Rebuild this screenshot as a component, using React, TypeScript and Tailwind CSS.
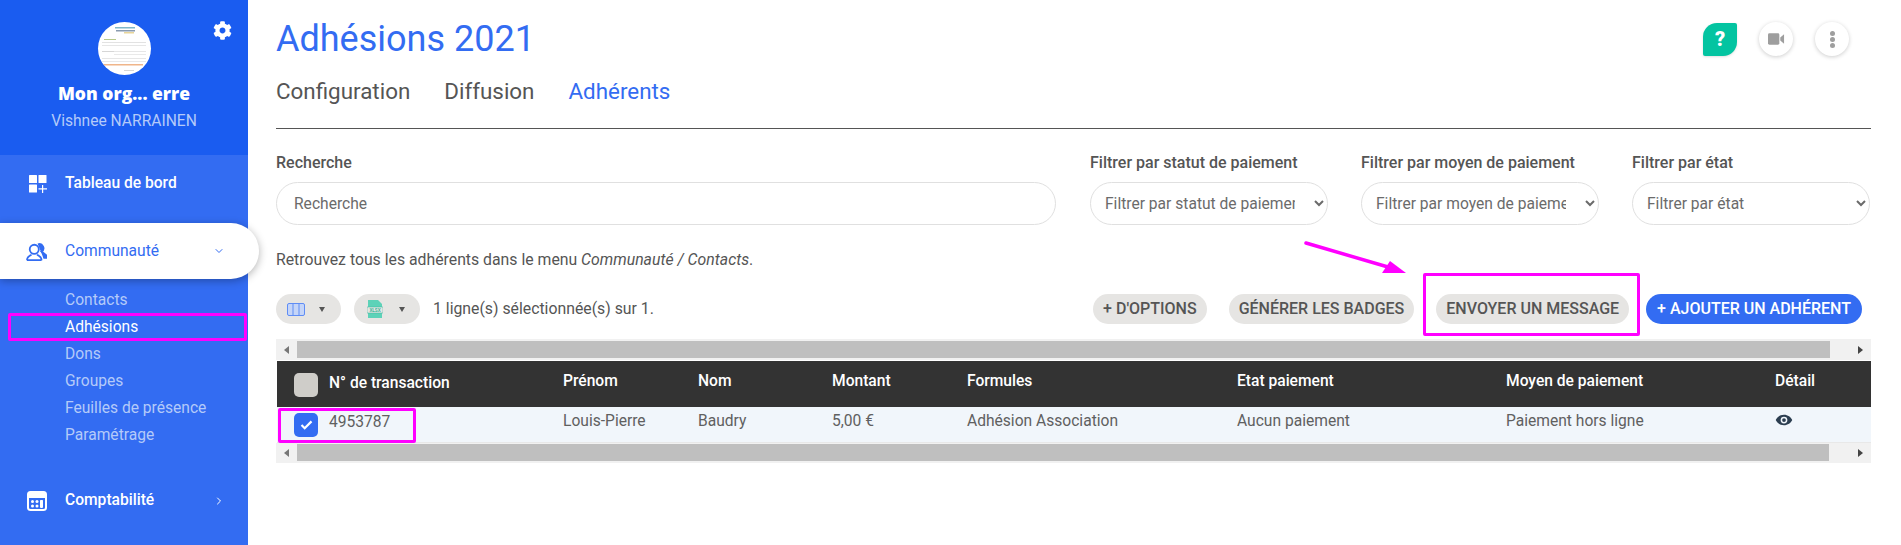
import React from 'react';
import { ChevronDown, ChevronRight } from 'lucide-react';
import { FaCog } from 'react-icons/fa';

const subItems = ['Contacts', 'Adhésions', 'Dons', 'Groupes', 'Feuilles de présence', 'Paramétrage'];

const columns = [
  { label: 'Prénom', value: 'Louis-Pierre', w: 'w-[135px]' },
  { label: 'Nom', value: 'Baudry', w: 'w-[134px]' },
  { label: 'Montant', value: '5,00 €', w: 'w-[135px]' },
  { label: 'Formules', value: 'Adhésion Association', w: 'w-[270px]' },
  { label: 'Etat paiement', value: 'Aucun paiement', w: 'w-[269px]' },
  { label: 'Moyen de paiement', value: 'Paiement hors ligne', w: 'w-[269px]' },
];

const Sidebar = () => {
  return (
    <aside className="w-[248px] shrink-0 h-[545px] bg-[#336cf2] relative">
      <div className="h-[155px] bg-[#1a5cf0] flex flex-col items-center pt-[22px] relative">
        <div className="w-[53px] h-[53px] rounded-full bg-white overflow-hidden">
          <svg viewBox="0 0 53 53" className="w-full h-full">
            <rect x="17" y="5" width="20" height="1.5" fill="#7fb7c9" />
            <rect x="18" y="8" width="19" height="1.5" fill="#8a9bb0" />
            <rect x="26" y="10" width="10" height="1.5" fill="#e8d59a" />
            <rect x="6" y="17" width="12" height="1" fill="#b7c98a" />
            <rect x="4" y="20" width="44" height="1" fill="#e2e2e2" />
            <rect x="4" y="23" width="44" height="1" fill="#e6e6e6" />
            <rect x="4" y="29" width="12" height="1" fill="#d6d6d6" />
            <rect x="16" y="29" width="32" height="1" fill="#e6e6e6" />
            <rect x="16" y="32" width="32" height="1" fill="#e9e9e9" />
            <rect x="4" y="36" width="44" height="1" fill="#e6e6e6" />
            <rect x="4" y="39" width="44" height="1" fill="#e9e9e9" />
            <rect x="5" y="42" width="40" height="1.5" fill="#f0b58a" />
            <rect x="26" y="48" width="10" height="1" fill="#d6d6d6" />
          </svg>
        </div>
        <div className="mt-[6px] text-[17.5px] leading-[24px] font-black text-white font-['Open_Sans',sans-serif]">Mon org... erre</div>
        <div className="text-[15.6px] leading-[20px] mt-[6px] text-[#b4caf9]">Vishnee NARRAINEN</div>
        <FaCog className="absolute left-[213px] top-[21px] w-[19px] h-[19px] text-white" />
      </div>

      <div className="h-[68px] pb-[10px] flex items-center pl-[29px] text-white text-[15.6px] font-medium">
        <svg viewBox="0 0 18 18" className="w-[18px] h-[18px] mr-[18px] fill-white">
          <rect x="0" y="0" width="8" height="8" rx="0.5" />
          <rect x="9.5" y="0" width="8" height="8" rx="0.5" />
          <rect x="0" y="9.5" width="8" height="8" rx="0.5" />
          <path d="M13 10h1.2v3.2H18v1.2h-3.8V18H13v-3.6H9.5v-1.2H13z" />
        </svg>
        Tableau de bord
      </div>

      <div className="w-[259px] h-[56px] pt-[1px] bg-white rounded-r-[28px] shadow-[0_2px_8px_rgba(0,0,0,0.3)] flex items-center pl-[25px] text-[#336cf2] text-[15.6px] relative">
        <svg viewBox="0 0 24 22" className="w-[24px] h-[20px] mr-[16px] fill-none stroke-[#336cf2]" strokeWidth="2">
          <circle cx="9" cy="8" r="5" />
          <path d="M1 20c0-4 3-5 5-6M17 20c0-4-3-5-5-6M1 20h16" />
          <path d="M13 2.5a4.5 4.5 0 0 1 4 8l5 4v3h-3" fill="#336cf2" />
        </svg>
        Communauté
        <ChevronDown className="absolute left-[213px] top-[22px] w-[12px] h-[12px]" strokeWidth={2} />
      </div>

      <ul className="pt-[8px] pl-[65px] text-[15.6px] leading-[27px] text-[#b4caf9]">
        {subItems.map((item) => (
          <li key={item} className={item === 'Adhésions' ? 'text-white' : ''}>{item}</li>
        ))}
      </ul>

      <div className="mt-[32px] h-[40px] flex items-center pl-[27px] text-white text-[15.6px] font-medium relative">
        <svg viewBox="0 0 20 20" className="w-[20px] h-[20px] mr-[18px]">
          <rect x="1" y="1" width="18" height="18" rx="2.5" fill="none" stroke="white" strokeWidth="2" />
          <rect x="1" y="1" width="18" height="6" fill="white" />
          <circle cx="5.5" cy="10.5" r="1.5" fill="white" />
          <circle cx="10" cy="10.5" r="1.5" fill="white" />
          <circle cx="14.5" cy="10.5" r="1.5" fill="white" />
          <circle cx="5.5" cy="15" r="1.5" fill="white" />
          <circle cx="10" cy="15" r="1.5" fill="white" />
          <rect x="13" y="9" width="3" height="8" rx="1" fill="white" />
        </svg>
        Comptabilité
        <ChevronRight className="absolute left-[213px] top-[14px] w-[12px] h-[12px]" strokeWidth={2} />
      </div>
    </aside>
  );
};

const FilterSelect = ({ label }: { label: string }) => {
  return (
    <div className="w-[238px]">
      <label className="block text-[16px] leading-[20px] font-medium text-[#555] mb-[9px]">{label}</label>
      <select className="w-[238px] h-[43px] pl-[10px] pr-[16px] rounded-[22px] border border-[#e0e0e0] bg-white text-[15.6px] text-[#6b6b6b]">
        <option>{label}</option>
      </select>
    </div>
  );
};

const ScrollBar = ({ thumb, className }: { thumb: string; className: string }) => {
  return (
    <div className={`${className} bg-[#f1f1f1] flex`}>
      <div className="w-[21px] h-[17px] flex items-center justify-center">
        <div className="w-0 h-0 border-y-[4px] border-y-transparent border-r-[5px] border-r-[#777]" />
      </div>
      <div className={`${thumb} h-[17px] bg-[#bfbfbf]`} />
      <div className="flex-1 h-[17px] flex items-center justify-end pr-[8px]">
        <div className="w-0 h-0 border-y-[4px] border-y-transparent border-l-[5px] border-l-[#444]" />
      </div>
    </div>
  );
};

const GreyButton = ({ children }: { children: React.ReactNode }) => {
  return (
    <button className="h-[30px] px-[10px] rounded-[15px] bg-[#e6e5e3] text-[#555] text-[16px] font-medium uppercase whitespace-nowrap">
      {children}
    </button>
  );
};

const Main = () => {
  return (
    <main className="flex-1 pl-[28px] pr-[30px] relative">
      <div className="flex items-start justify-between h-[61px]">
        <h1 className="mt-[17px] text-[36px] leading-[44px] text-[#336cf2]">Adhésions 2021</h1>
        <div className="flex items-center gap-[22px] mt-[22px] mr-[22px]">
          <div className="w-[34px] h-[33px] bg-[#03c4a1] rounded-tl-[14px] rounded-br-[14px] rounded-tr-[2px] rounded-bl-[2px] flex items-center justify-center text-white text-[20px] font-black shadow-sm">?</div>
          <div className="w-[34px] h-[34px] rounded-full bg-white shadow-[0_1px_4px_rgba(0,0,0,0.2)] flex items-center justify-center">
            <svg viewBox="0 0 18 12" className="w-[17px] h-[12px] fill-[#9e9e9e]">
              <rect x="0" y="0" width="12" height="12" rx="1.5" />
              <path d="M13 4.5 17 1v10l-4-3.5z" />
            </svg>
          </div>
          <div className="w-[34px] h-[34px] rounded-full bg-white shadow-[0_1px_4px_rgba(0,0,0,0.2)] flex flex-col items-center justify-center gap-[1px]">
            <span className="w-[5px] h-[5px] rounded-full bg-[#9e9e9e]" />
            <span className="w-[5px] h-[5px] rounded-full bg-[#9e9e9e]" />
            <span className="w-[5px] h-[5px] rounded-full bg-[#9e9e9e]" />
          </div>
        </div>
      </div>

      <div className="flex gap-[34px] h-[68px] border-b border-[#555] pt-[16px] text-[22.4px] leading-[28px] text-[#555]">
        <span>Configuration</span>
        <span>Diffusion</span>
        <span className="text-[#336cf2]">Adhérents</span>
      </div>

      <div className="flex mt-[24px]">
        <div className="w-[780px] mr-[34px]">
          <label className="block text-[16px] leading-[20px] font-medium text-[#555] mb-[9px]">Recherche</label>
          <input placeholder="Recherche" className="w-full h-[43px] px-[17px] rounded-[22px] border border-[#e0e0e0] bg-white text-[15.6px] placeholder:text-[#6b6b6b]" />
        </div>
        <div className="flex gap-[33px]">
          <FilterSelect label="Filtrer par statut de paiement" />
          <FilterSelect label="Filtrer par moyen de paiement" />
          <FilterSelect label="Filtrer par état" />
        </div>
      </div>

      <p className="mt-[25px] text-[15.8px] leading-[20px] text-[#555]">
        Retrouvez tous les adhérents dans le menu <em>Communauté / Contacts</em>.
      </p>

      <div className="flex items-center mt-[24px] h-[30px]">
        <div className="w-[65px] h-[30px] rounded-[15px] bg-[#e6e5e3] flex items-center pl-[11px]">
          <svg viewBox="0 0 18 13" className="w-[18px] h-[13px] fill-[#c5d5f8] stroke-[#5f8df5]" strokeWidth="1">
            <rect x="0.5" y="0.5" width="17" height="12" rx="1.5" />
            <path d="M6 .5v12M12 .5v12" fill="none" />
          </svg>
          <span className="ml-[14px] w-0 h-0 border-x-[3.5px] border-x-transparent border-t-[5px] border-t-[#555]" />
        </div>
        <div className="ml-[13px] w-[66px] h-[30px] rounded-[15px] bg-[#e6e5e3] flex items-center pl-[13px]">
          <svg viewBox="0 0 16 18" className="w-[16px] h-[18px]">
            <path d="M1 0h10l4 4v14H1z" fill="#5dd2b8" />
            <rect x="0" y="7" width="16" height="6" fill="#e6e5e3" stroke="#3db79c" strokeWidth="0.5" />
            <text x="8" y="11.6" textAnchor="middle" fontSize="4.6" fontWeight="700" fill="#3db79c">XLSX</text>
          </svg>
          <span className="ml-[16px] w-0 h-0 border-x-[3.5px] border-x-transparent border-t-[5px] border-t-[#555]" />
        </div>
        <span className="ml-[13px] text-[15.8px] text-[#555]">1 ligne(s) sélectionnée(s) sur 1.</span>
        <div className="ml-auto mr-[9px] flex gap-[22px]">
          <GreyButton>+ d'options</GreyButton>
          <GreyButton>Générer les badges</GreyButton>
          <GreyButton>Envoyer un message</GreyButton>
          <button className="h-[30px] px-[11px] -ml-[5px] rounded-[15px] bg-[#336cf2] text-white text-[16px] font-medium uppercase whitespace-nowrap">+ Ajouter un adhérent</button>
        </div>
      </div>

      <div className="mt-[15px]">
        <ScrollBar thumb="w-[1533px]" className="h-[21px] pt-[2px]" />
        <div className="mt-[1px] ml-[1px] h-[46px] bg-[#333] flex items-center text-white text-[15.6px] font-medium">
          <div className="w-[286px] flex items-center pl-[17px] pt-[2px]">
            <span className="w-[24px] h-[24px] rounded-[5px] bg-[#cfcdc9] mr-[11px]" />
            <span className="-mt-[3px]">N° de transaction</span>
          </div>
          {columns.map((c) => (
            <div key={c.label} className={`${c.w} -mt-[5px]`}>{c.label}</div>
          ))}
          <div className="-mt-[5px]">Détail</div>
        </div>
        <div className="ml-[1px] h-[36px] bg-[#f1f6fb] border-b border-[#e8e8e8] flex items-center text-[#606060] text-[15.6px]">
          <div className="w-[286px] flex items-center pl-[17px]">
            <span className="w-[24px] h-[24px] rounded-[5px] bg-[#336cf2] mr-[11px] flex items-center justify-center">
              <svg viewBox="0 0 14 11" className="w-[13px] h-[10px] fill-none stroke-white" strokeWidth="2.4">
                <path d="M1.5 5.5 5 9l7.5-7.5" />
              </svg>
            </span>
            <span className="-mt-[3px]">4953787</span>
          </div>
          {columns.map((c) => (
            <div key={c.label} className={`${c.w} -mt-[5px]`}>{c.value}</div>
          ))}
          <svg viewBox="0 0 24 24" className="w-[18px] h-[18px] -mt-[10px] fill-[#2c3e50]">
            <path d="M12 5C7 5 2.7 8.1 1 12c1.7 3.9 6 7 11 7s9.3-3.1 11-7c-1.7-3.9-6-7-11-7zm0 11.5a4.5 4.5 0 1 1 0-9 4.5 4.5 0 0 1 0 9zm0-7a2.5 2.5 0 1 0 0 5 2.5 2.5 0 0 0 0-5z" />
          </svg>
        </div>
        <ScrollBar thumb="w-[1532px]" className="h-[20px] pt-[1px]" />
      </div>

      {/* annotations drawn over the screenshot */}
      <div className="absolute left-[-240px] top-[313px] w-[239px] h-[28px] border-[3px] border-[#ff00ff] rounded-[2px]" />
      <div className="absolute left-[30px] top-[408px] w-[138px] h-[35px] border-[3px] border-[#ff00ff] rounded-[2px]" />
      <div className="absolute left-[1175px] top-[273px] w-[217px] h-[63px] border-[3px] border-[#ff00ff] rounded-[2px]" />
      <svg className="absolute left-[1050px] top-[235px] w-[110px] h-[50px]" viewBox="0 0 110 50">
        <path d="M8 8 90 32" stroke="#ff00ff" strokeWidth="3.5" strokeLinecap="round" />
        <path d="M84 38 92 26l16 12z" fill="#ff00ff" />
      </svg>
    </main>
  );
};

export default function App() {
  return (
    <div className="flex w-[1901px] h-[545px] overflow-hidden bg-white font-['Roboto',sans-serif]">
      <Sidebar />
      <Main />
    </div>
  );
}
